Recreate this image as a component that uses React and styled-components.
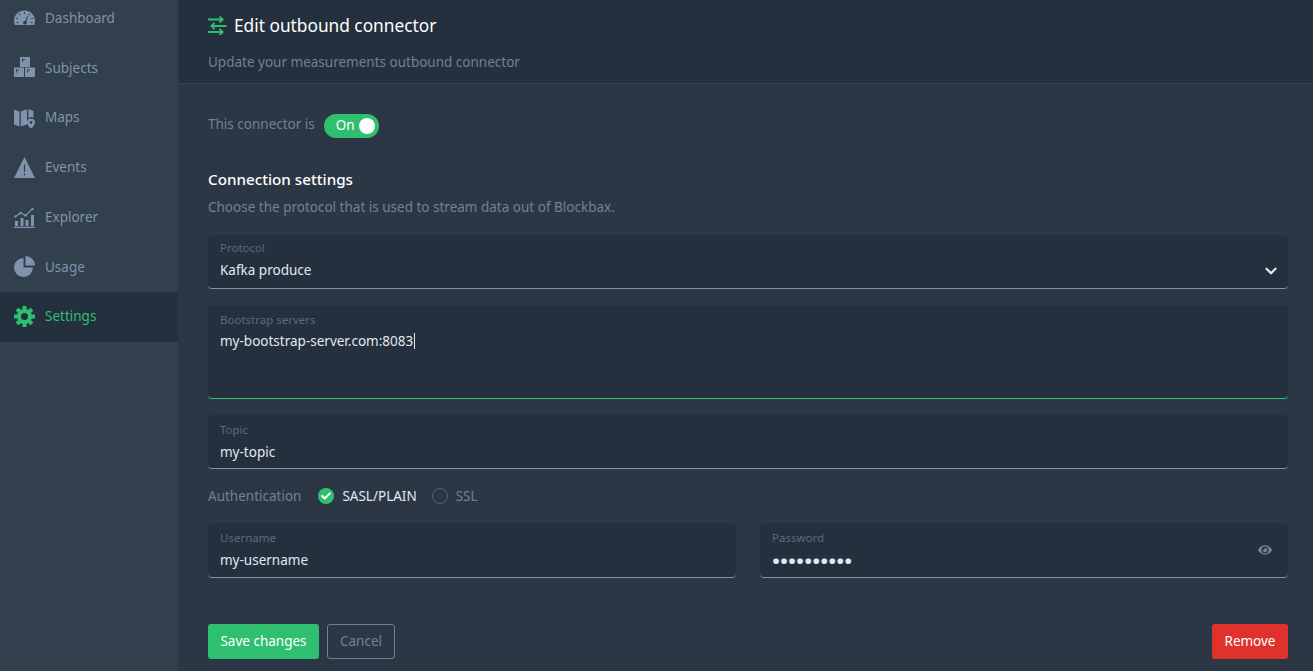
import React from 'react';
import styled, { createGlobalStyle } from 'styled-components';
import { FaEye, FaCheck } from 'react-icons/fa';
import { FiChevronDown } from 'react-icons/fi';

const Global = createGlobalStyle`
    html, body {
        margin: 0;
        height: 671px;
        overflow: hidden;
        background: #2c3745;
    }
    * {
        box-sizing: border-box;
    }
    body {
        font-family: "Noto Sans", "Liberation Sans", sans-serif;
        font-size: 13.5px;
    }
`

const Layout = styled.div`
    display: flex;
    height: 671px;
    overflow: hidden;
`
const Sidebar = styled.nav`
    flex: 0 0 179px;
    background: #323f4c;
    border-right: 1px solid #2b3543;
    overflow: hidden;
`
const MenuList = styled.ul`
    list-style: none;
    margin: -7px 0 0;
    padding: 0;
`
const MenuItem = styled.li`
    display: flex;
    align-items: center;
    height: 49.8px;
    padding-left: 14px;
    gap: 10px;
    color: ${p => (p.$active ? '#2fbf71' : '#7f93ad')};
    background: ${p => (p.$active ? '#24303d' : 'transparent')};
    svg {
        width: 21px;
        height: 21px;
        flex: none;
        fill: currentColor;
    }
`
const MenuLabel = styled.span`
    margin-top: ${p => (p.$active ? '-2px' : '0')};
`
const Main = styled.main`
    flex: 1;
    min-width: 0;
    color: #fff;
`
const Header = styled.header`
    height: 84px;
    padding: 14px 25px 0 29px;
    background: #24303d;
    border-bottom: 1px solid #364352;
`
const Title = styled.h1`
    display: flex;
    align-items: center;
    gap: 7px;
    margin: 0;
    height: 22px;
    font-size: 17.3px;
    font-weight: 400;
    color: #fff;
`
const Subtitle = styled.p`
    margin: 16px 0 0;
    color: #718096;
    line-height: 20px;
`
const Content = styled.div`
    padding: 30px 25px 0 29px;
`
const StatusRow = styled.div`
    display: flex;
    align-items: center;
    gap: 9px;
    height: 24px;
    color: #718096;
`
const StatusText = styled.span`
    margin-top: -5px;
`
const Toggle = styled.div`
    display: flex;
    align-items: center;
    justify-content: space-between;
    width: 55px;
    height: 24px;
    padding: 0 4px 0 12px;
    border-radius: 12px;
    background: #2fbf71;
    color: #fff;
`
const ToggleText = styled.span`
    margin-top: -2px;
`
const Knob = styled.span`
    width: 16px;
    height: 16px;
    border-radius: 50%;
    background: #fff;
`
const SectionTitle = styled.h2`
    margin: 29px 0 0;
    font-size: 15.2px;
    line-height: 24px;
    font-weight: 500;
    color: #fff;
`
const SectionText = styled.p`
    margin: 6px 0 18px;
    line-height: 20px;
    color: #718096;
`
const Field = styled.div`
    position: relative;
    height: ${p => p.$height || 54}px;
    margin-bottom: ${p => p.$gap ?? 16}px;
    padding: ${p => p.$top ?? 7}px 12px 0;
    background: #24303d;
    border-radius: 4px;
    border-bottom: 1px solid ${p => (p.$focus ? '#2fbf71' : '#8291a6')};
`
const Label = styled.label`
    display: block;
    font-size: 11.5px;
    line-height: 16px;
    color: #5b6a80;
`
const Value = styled.div`
    margin-top: ${p => p.$top ?? 4}px;
    line-height: 20px;
    color: #e2e8f0;
`
const Caret = styled.span`
    display: inline-block;
    width: 1px;
    height: 16px;
    margin-left: 1px;
    vertical-align: -3px;
    background: #e2e8f0;
`
const Dots = styled(Value)`
    margin-top: 4px;
    font-size: 13.3px;
`
const FieldIcon = styled.span`
    position: absolute;
    right: ${p => p.$right}px;
    top: ${p => p.$top}px;
    display: flex;
    color: ${p => p.$color};
`
const AuthRow = styled.div`
    display: flex;
    align-items: center;
    height: 20px;
    margin: 17px 0 17px;
    color: #718096;
`
const AuthLabel = styled.span`
    margin-right: 17px;
`
const Radio = styled.span`
    display: flex;
    align-items: center;
    justify-content: center;
    width: 16px;
    height: 16px;
    margin-right: 8px;
    border-radius: 50%;
    color: #fff;
    background: ${p => (p.$checked ? '#2fbf71' : 'transparent')};
    border: ${p => (p.$checked ? '0' : '1px solid #566579')};
`
const RadioText = styled.span`
    margin-right: ${p => p.$gap || 0}px;
    color: ${p => (p.$checked ? '#e2e8f0' : '#718096')};
`
const TwoCols = styled.div`
    display: grid;
    grid-template-columns: 1fr 1fr;
    gap: 24px;
`
const UserField = styled(Field)`
    height: 55px;
`
const Actions = styled.div`
    display: flex;
    align-items: center;
    gap: 8px;
    margin-top: 46px;
`
const Button = styled.button`
    width: ${p => p.$width}px;
    height: 35px;
    padding: 0 0 2px;
    border-radius: 3px;
    font: inherit;
    color: ${p => p.$color || '#fff'};
    background: ${p => p.$bg || 'transparent'};
    border: ${p => (p.$outline ? '1px solid #718096' : '0')};
`
const Spacer = styled.div`
    flex: 1;
`

const GaugeIcon = () => (
    <svg viewBox="0 0 21 21">
        <path fillRule="evenodd" d="M10.5 3.500C4.700 3.500 0 8 0 13.800c0 1.500.3 2.900.9 4.200h19.200c.6-1.300.9-2.700.9-4.200C21 8 16.300 3.500 10.500 3.500zM10 5h1v2h-1V5zM5.400 6.400l1.300 1.600-.8.6-1.200-1.600.7-.6zm10.200 0l.7.6-1.200 1.600-.8-.6 1.300-1.600zM2.200 10.800l1.900.6-.3.9-1.900-.6.3-.9zm16.600 0l.3.9-1.900.6-.3-.9 1.900-.6zM13.300 9.200l.9.5-2 4.500a1.900 1.900 0 1 1-.9-.4l2-4.600zM2.400 15h2v1h-2v-1zm14.200 0h2v1h-2v-1z" />
    </svg>
)
const BoxesIcon = () => (
    <svg viewBox="0 0 21 21">
        <path fillRule="evenodd" d="M6 0h10v10H6V0zm2 2v3h1V3h2V2H8zM0 10.500h10V20H0v-9.500zm2 2v3h1v-2h2v-1H2zM11 10.500h10V20H11v-9.500zm2 2v3h1v-2h2v-1h-3z" />
    </svg>
)
const MapIcon = () => (
    <svg viewBox="0 0 21 21">
        <path d="M0 2.500l5.500 2v15L0 17.500v-15zM6.800 4.500L13 2.200v15.300l-6.200 2v-15zM14.300 2.200L19.500 4v6.400a5 5 0 0 0-5.200.8V2.200z" />
        <path fillRule="evenodd" d="M17 11.500a4 4 0 0 1 4 4c0 2.200-2.600 4.900-4 6.500-1.400-1.600-4-4.300-4-6.500a4 4 0 0 1 4-4zm0 2.600a1.400 1.400 0 1 0 0 2.800 1.400 1.400 0 0 0 0-2.800z" />
    </svg>
)
const TriangleIcon = () => (
    <svg viewBox="0 0 21 21">
        <path fillRule="evenodd" d="M10.500 0L21 21H0L10.500 0zM9.900 7.500v7.500h1.200V7.500H9.900zm0 9v1.700h1.200v-1.700H9.900z" />
    </svg>
)
const ChartIcon = () => (
    <svg viewBox="0 0 21 21">
        <path d="M0 19.800h21V21H0zM1 14h3v5H1zM6.500 11h3v8h-3zM11.500 13h3v6h-3zM17 8h3v11h-3z" />
        <path d="M1.500 9.500l5-3.500 5 2.500 7-6.500" fill="none" stroke="currentColor" strokeWidth="1.100" />
        <circle cx="1.500" cy="9.500" r="1.200" />
        <circle cx="6.500" cy="6" r="1.200" />
        <circle cx="11.500" cy="8.500" r="1.200" />
        <circle cx="18.500" cy="2" r="1.200" />
    </svg>
)
const PieIcon = () => (
    <svg viewBox="0 0 21 21">
        <path d="M9.500 2v9.500H19A9.500 9.500 0 1 1 9.500 2z" />
        <path d="M11.500 0A9.500 9.500 0 0 1 21 9.500h-9.500V0z" />
    </svg>
)
const GearIcon = () => (
    <svg viewBox="0 0 21 21">
        <circle cx="10.500" cy="10.500" r="5.500" fill="none" stroke="currentColor" strokeWidth="4" />
        {[0, 45, 90, 135, 180, 225, 270, 315].map(angle => (
            <rect key={angle} x="8.500" y="0" width="4" height="5" rx="0.600" transform={`rotate(${angle} 10.500 10.500)`} />
        ))}
    </svg>
)
const ArrowsIcon = () => (
    <svg width="19" height="19" viewBox="0 0 19 19" fill="none" stroke="#2fbf71" strokeWidth="1.800">
        <path d="M0 3.500h15M11.500 0.500l3.200 3-3.200 3M18.500 10H3.500M6.500 7l-3 3 3 3M0 16h15M11.500 13l3.200 3-3.200 3" />
    </svg>
)

const menu = [
    { label: 'Dashboard', icon: <GaugeIcon /> },
    { label: 'Subjects', icon: <BoxesIcon /> },
    { label: 'Maps', icon: <MapIcon /> },
    { label: 'Events', icon: <TriangleIcon /> },
    { label: 'Explorer', icon: <ChartIcon /> },
    { label: 'Usage', icon: <PieIcon /> },
    { label: 'Settings', icon: <GearIcon />, active: true },
]

export default function App() {
    return (
        <Layout>
            <Global />
            <Sidebar>
                <MenuList>
                    {menu.map(item => (
                        <MenuItem key={item.label} $active={item.active}>
                            {item.icon}
                            <MenuLabel $active={item.active}>{item.label}</MenuLabel>
                        </MenuItem>
                    ))}
                </MenuList>
            </Sidebar>
            <Main>
                <Header>
                    <Title><ArrowsIcon />Edit outbound connector</Title>
                    <Subtitle>Update your measurements outbound connector</Subtitle>
                </Header>
                <Content>
                    <StatusRow>
                        <StatusText>This connector is</StatusText>
                        <Toggle><ToggleText>On</ToggleText><Knob /></Toggle>
                    </StatusRow>
                    <SectionTitle>Connection settings</SectionTitle>
                    <SectionText>Choose the protocol that is used to stream data out of Blockbax.</SectionText>
                    <Field $top={5}>
                        <Label>Protocol</Label>
                        <Value>Kafka produce</Value>
                        <FieldIcon $right={8} $top={27} $color="#e2e8f0"><FiChevronDown size={18} strokeWidth={3} /></FieldIcon>
                    </Field>
                    <Field $height={94} $focus>
                        <Label>Bootstrap servers</Label>
                        <Value $top={3}>my-bootstrap-server.com:8083<Caret /></Value>
                    </Field>
                    <Field>
                        <Label>Topic</Label>
                        <Value>my-topic</Value>
                    </Field>
                    <AuthRow>
                        <AuthLabel>Authentication</AuthLabel>
                        <Radio $checked><FaCheck size={10} /></Radio>
                        <RadioText $checked $gap={15}>SASL/PLAIN</RadioText>
                        <Radio />
                        <RadioText>SSL</RadioText>
                    </AuthRow>
                    <TwoCols>
                        <UserField $gap={0}>
                            <Label>Username</Label>
                            <Value>my-username</Value>
                        </UserField>
                        <UserField $gap={0}>
                            <Label>Password</Label>
                            <Dots>●●●●●●●●●●</Dots>
                            <FieldIcon $right={16} $top={20} $color="#718096"><FaEye size={14} /></FieldIcon>
                        </UserField>
                    </TwoCols>
                    <Actions>
                        <Button $bg="#2fbf71" $width={111}>Save changes</Button>
                        <Button $outline $color="#718096" $width={68}>Cancel</Button>
                        <Spacer />
                        <Button $bg="#e0322d" $width={76}>Remove</Button>
                    </Actions>
                </Content>
            </Main>
        </Layout>
    );
}
